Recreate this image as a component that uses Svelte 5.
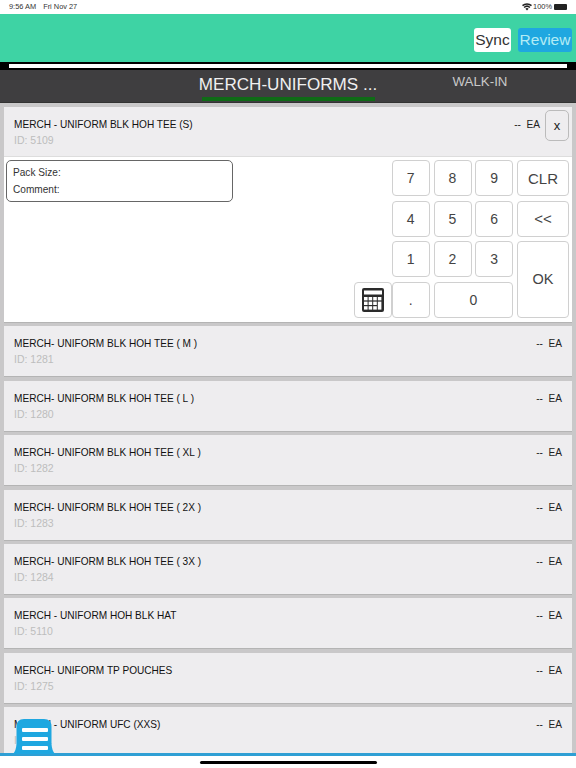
<script lang="ts">
  const rows = [
    { name: 'MERCH- UNIFORM BLK HOH TEE ( M )', id: 1281 },
    { name: 'MERCH- UNIFORM BLK HOH TEE ( L )', id: 1280 },
    { name: 'MERCH- UNIFORM BLK HOH TEE ( XL )', id: 1282 },
    { name: 'MERCH- UNIFORM BLK HOH TEE ( 2X )', id: 1283 },
    { name: 'MERCH- UNIFORM BLK HOH TEE ( 3X )', id: 1284 },
    { name: 'MERCH - UNIFORM HOH BLK HAT', id: 5110 },
    { name: 'MERCH- UNIFORM TP POUCHES', id: 1275 },
    { name: 'MERCH - UNIFORM UFC (XXS)', id: 5111 }
  ];
  const keys = ['7', '8', '9', 'CLR', '4', '5', '6', '<<', '1', '2', '3'];
  // calculator buttons: the bottom right one is drawn taller
  const calcKeys = [
    [0, 0], [1, 0], [2, 0], [3, 0],
    [0, 1], [1, 1], [2, 1],
    [0, 2], [1, 2], [2, 2]
  ];
</script>

<div class="screen">
  <div class="status">
    <span class="time">9:56 AM</span>
    <span class="date">Fri Nov 27</span>
    <span class="spacer"></span>
    <svg class="wifi" width="10" height="8" viewBox="0 0 10 8">
      <path d="M5 7.6 3.4 5.8a2.4 2.4 0 0 1 3.2 0z" fill="#222" />
      <path d="M2.6 5 1.6 3.9a5 5 0 0 1 6.8 0L7.4 5a3.6 3.6 0 0 0-4.8 0z" fill="#222" />
      <path d="M1 3.2 0 2.1a7.4 7.4 0 0 1 10 0L9 3.2a6 6 0 0 0-8 0z" fill="#222" />
    </svg>
    <span class="pct">100%</span>
    <span class="battery"></span>
  </div>

  <div class="topbar">
    <button class="sync">Sync</button>
    <button class="review">Review</button>
  </div>

  <div class="progress"><div></div></div>

  <div class="tabs">
    <span></span>
    <div class="tab active"><span>MERCH-UNIFORMS ...</span></div>
    <div class="tab">WALK-IN</div>
  </div>

  <div class="list">
    <div class="card open">
      <div class="row head">
        <div class="info">
          <div class="name">MERCH - UNIFORM BLK HOH TEE (S)</div>
          <div class="id">ID: 5109</div>
        </div>
        <div class="qty">--&nbsp; EA</div>
        <button class="close">x</button>
      </div>
      <div class="panel">
        <div class="packbox">
          <div>Pack Size:</div>
          <div>Comment:</div>
        </div>
        <div class="keypad">
          <span></span>
          {#each keys as k}
            <button class="key" class:wide={k === 'CLR' || k === '<<'}>{k}</button>
          {/each}
          <button class="key ok">OK</button>
          <button class="key calc" aria-label="calculator">
            <svg width="22" height="24" viewBox="0 0 22 24">
              <rect width="22" height="24" rx="2" fill="#2b2b2b" />
              <rect x="2" y="2.5" width="18" height="4" fill="#fff" />
              {#each calcKeys as [c, r]}
                <rect x={2 + c * 4.6} y={9 + r * 4.6} width="3.6" height="3.4" fill="#fff" />
              {/each}
              <rect x="15.8" y="13.6" width="3.6" height="8" fill="#fff" />
            </svg>
          </button>
          <button class="key dot">.</button>
          <button class="key zero">0</button>
        </div>
      </div>
    </div>

    {#each rows as row}
      <div class="card">
        <div class="row">
          <div class="info">
            <div class="name">{row.name}</div>
            <div class="id">ID: {row.id}</div>
          </div>
          <div class="qty">--&nbsp; EA</div>
        </div>
      </div>
    {/each}
  </div>

  <div class="bottom">
    <svg class="menu" width="42" height="35" viewBox="0 0 42 35">
      <path d="M0 35Q3 32 3.5 25L3.5 8Q3.5 0 11 0L31 0Q38.5 0 38.5 8L38.5 25Q39 32 42 35Z" fill="#1fa7e0" />
      <rect x="9" y="9" width="26" height="4" rx="1" fill="#fff" />
      <rect x="9" y="18" width="26" height="4" rx="1" fill="#fff" />
      <rect x="9" y="27" width="26" height="4" rx="1" fill="#fff" />
    </svg>
    <div class="home"></div>
  </div>
</div>

<style>
  :global(body) {
    margin: 0;
    overflow: hidden;
  }

  :global(*) {
    box-sizing: border-box;
  }

  button {
    font-family: inherit;
    margin: 0;
    padding: 0;
  }

  .screen {
    width: 576px;
    height: 768px;
    display: flex;
    flex-direction: column;
    overflow: hidden;
    background: #c9c8c9;
    font-family: 'Liberation Sans', Arial, sans-serif;
  }

  .status {
    height: 14px;
    flex: none;
    background: #fff;
    display: flex;
    align-items: center;
    padding: 0 9px 1px 9px;
    font-size: 7.4px;
    color: #333;
  }

  .date {
    margin-left: 7px;
  }

  .spacer {
    flex: 1;
  }

  .pct {
    margin-left: 1px;
  }

  .battery {
    width: 13px;
    height: 6px;
    margin-left: 2px;
    border-radius: 1px;
    background: #222;
    display: block;
  }

  .topbar {
    height: 48px;
    flex: none;
    background: #3ed3a4;
    display: flex;
    justify-content: flex-end;
    align-items: flex-start;
    gap: 7px;
    padding: 14px 4px 0 0;
  }

  .sync,
  .review {
    height: 24px;
    border: 0;
    border-radius: 3px;
    font-size: 15.5px;
  }

  .sync {
    width: 37px;
    background: #fff;
    color: #333;
  }

  .review {
    width: 54px;
    background: #1fa7e0;
    color: #b4ecf5;
  }

  .progress {
    height: 8px;
    flex: none;
    background: #000;
    padding: 2px 9px;
  }

  .progress div {
    height: 4px;
    background: #fff;
  }

  .tabs {
    height: 33px;
    flex: none;
    background: #3f3e40;
    display: grid;
    grid-template-columns: 192px 192px 192px;
    color: #e6e6e6;
    border-bottom: 1px solid #333;
  }

  .tab {
    text-align: center;
    font-size: 13.3px;
    line-height: 24px;
    color: #c9c9c9;
  }

  .tab.active {
    font-size: 17.1px;
    line-height: 30px;
    color: #f0f0f0;
    position: relative;
  }

  .tab.active::after {
    content: '';
    position: absolute;
    left: 10px;
    right: 9px;
    bottom: 1px;
    height: 4px;
    background: #0f6b16;
  }

  .list {
    flex: 1;
    min-height: 0;
    overflow: hidden;
    padding: 4px 4px 0;
    display: flex;
    flex-direction: column;
    gap: 3.4px;
  }

  .card {
    flex: none;
    background: #eeedef;
    border-bottom: 1px solid #b4b4b4;
  }

  .row {
    height: 50px;
    display: flex;
    padding: 11px 10px 0;
  }

  .info {
    flex: 1;
  }

  .name {
    font-size: 10.1px;
    line-height: 14px;
    color: #111;
  }

  .id {
    font-size: 10.5px;
    line-height: 14px;
    margin-top: 1px;
    color: #bdbdbd;
  }

  .qty {
    font-size: 10.1px;
    line-height: 14px;
    color: #222;
  }

  .head {
    padding-right: 3px;
    border-bottom: 1px solid #ddd;
  }

  .close {
    width: 24px;
    height: 31px;
    margin: -8px 0 0 5px;
    background: #eeedef;
    border: 1px solid #bbb;
    border-radius: 5px;
    font-size: 13px;
    color: #222;
  }

  .panel {
    height: 165px;
    background: #fff;
    display: flex;
    justify-content: space-between;
    padding: 3px 3px 0 2px;
  }

  .packbox {
    width: 227px;
    height: 42px;
    border: 1px solid #666;
    border-radius: 5px;
    padding: 3px 6px;
    font-size: 10.1px;
    line-height: 17px;
    color: #333;
  }

  .keypad {
    display: grid;
    grid-template-columns: 34px 38px 38px 38px 52px;
    grid-template-rows: repeat(4, 36px);
    gap: 4.5px 3.75px;
  }

  .key {
    background: #fff;
    border: 1px solid #d0d0d0;
    border-radius: 4px;
    font-size: 14px;
    color: #444;
  }

  .keypad > span {
    grid-row: 1 / 4;
  }

  .wide {
    font-size: 15px;
  }

  .ok {
    grid-column: 5;
    grid-row: 3 / 5;
    font-size: 14.5px;
  }

  .calc {
    grid-column: 1;
    grid-row: 4;
    width: 38px;
    display: flex;
    align-items: center;
    justify-content: center;
  }

  .dot {
    grid-column: 2;
    grid-row: 4;
    position: relative;
  }

  .zero {
    grid-column: 3 / 5;
    grid-row: 4;
  }

  .bottom {
    height: 15px;
    flex: none;
    background: #fff;
    border-top: 3px solid #2f9fd4;
    position: relative;
    display: flex;
    justify-content: center;
    align-items: center;
  }

  .home {
    width: 177px;
    height: 3px;
    border-radius: 2px;
    background: #000;
  }

  .menu {
    position: absolute;
    left: 13px;
    bottom: 14px;
  }
</style>
